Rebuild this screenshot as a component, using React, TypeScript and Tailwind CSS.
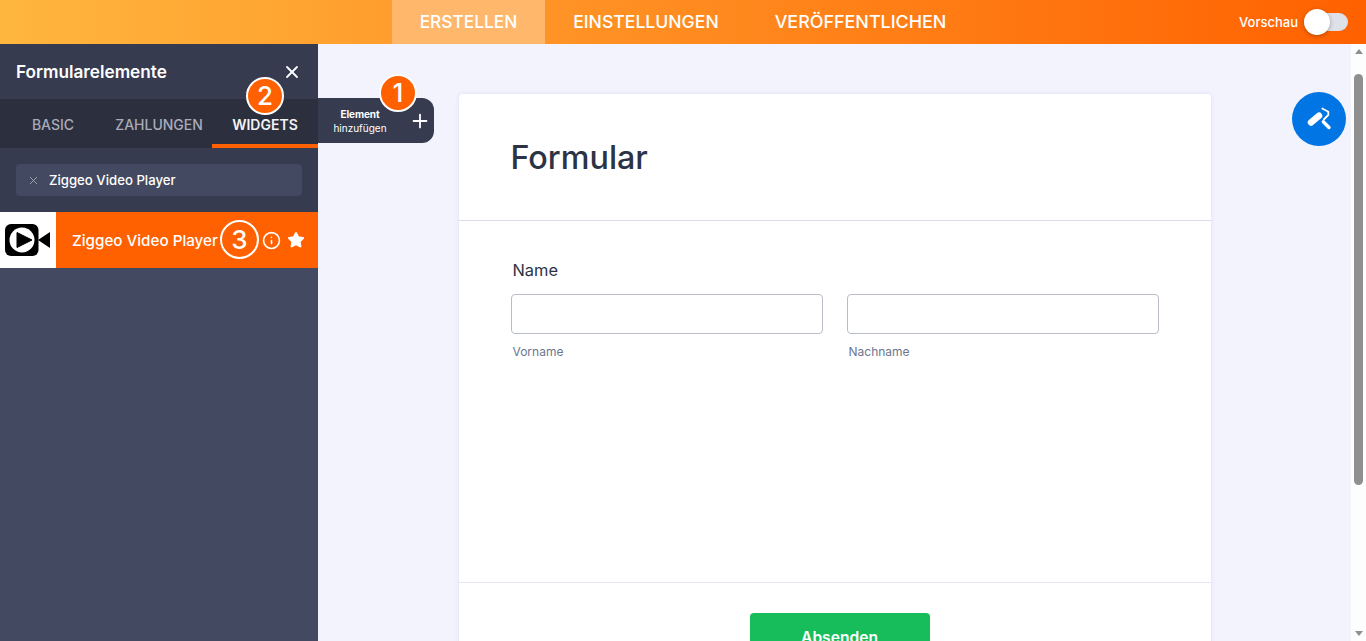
import { Plus, X, Star, Info } from "lucide-react";

function Badge({ n, className }: { n: string; className: string }) {
  return (
    <div className={`absolute z-20 flex items-center justify-center rounded-full border-2 border-white bg-[#ff6100] text-[26px] font-medium leading-none text-white ${className}`}>
      {n}
    </div>
  );
}

function VideoLogo() {
  return (
    <svg width="46" height="32" viewBox="0 0 46 32">
      <rect x="0" y="0" width="33.5" height="32" rx="6" fill="#000" />
      <circle cx="17" cy="16" r="12.5" fill="#fff" />
      <path d="M12 8.5 L27 16 L12 23.5 Z" fill="#000" stroke="#000" strokeWidth="1" strokeLinejoin="round" />
      <path d="M33 16 L45 8 V24 Z" fill="#000" />
    </svg>
  );
}

function RollerIcon() {
  return (
    <svg width="26" height="26" viewBox="0 0 26 26" fill="none">
      <path d="M5 16.5 L13 9.8" stroke="#fff" strokeWidth="6.5" strokeLinecap="round" />
      <path d="M15.7 2.3 L22.3 5.7 V9 L17.3 14" stroke="#fff" strokeWidth="1.8" strokeLinejoin="round" fill="none" />
      <path d="M17.3 15.7 L23 21.5" stroke="#fff" strokeWidth="3.4" strokeLinecap="round" />
    </svg>
  );
}

export default function App() {
  return (
    <div className="relative flex h-[641px] w-[1366px] flex-col overflow-hidden bg-[#f3f3fe] font-['Inter',sans-serif]">
      <header className="relative flex h-11 shrink-0 items-stretch justify-center bg-[linear-gradient(90deg,#ffb63f_0%,#ff6100_100%)] text-white">
        <nav className="flex items-stretch font-medium">
          <a className="flex items-center bg-[#ffb76b] px-7 text-[17.3px]">ERSTELLEN</a>
          <a className="flex items-center px-7 text-[17.6px]">EINSTELLUNGEN</a>
          <a className="flex items-center px-7 text-[17.9px]">VERÖFFENTLICHEN</a>
        </nav>
        <div className="absolute right-[18px] top-0 flex h-11 items-center gap-[6px]">
          <span className="pt-[1px] text-[13px] font-medium">Vorschau</span>
          <div className="relative h-[18px] w-11 rounded-full bg-[#dfe1e8]">
            <div className="absolute left-0 top-[-4px] h-[26px] w-[26px] rounded-full bg-white shadow-[0_1px_4px_rgba(0,0,0,0.3)]" />
          </div>
        </div>
      </header>

      <div className="flex min-h-0 flex-1">
        <aside className="flex w-[318px] shrink-0 flex-col bg-[#434960] text-white">
          <div className="flex h-[55px] items-center justify-between bg-[#363b4f] pl-4 pr-[16px]">
            <h2 className="pt-[1px] text-[17.2px] font-semibold">Formularelemente</h2>
            <X size={20} strokeWidth={2.2} />
          </div>
          <div className="flex h-[49px] bg-[#2c2f3e] text-[14px] font-medium">
            <div className="flex w-[106px] items-center justify-center pt-[2px] text-[#a9abb8]">BASIC</div>
            <div className="flex w-[106px] items-center justify-center pt-[2px] text-[#a9abb8]">ZAHLUNGEN</div>
            <div className="flex w-[106px] items-center justify-center border-b-4 border-[#ff6100] pt-[5px] font-semibold text-[#f2f2f5]">WIDGETS</div>
          </div>
          <div className="flex h-16 items-center bg-[#363b4f] px-4">
            <div className="flex h-8 w-full items-center gap-[9px] rounded bg-[#434960] pl-[11px] text-[13.2px] font-medium">
              <X size={13} strokeWidth={1.6} className="text-[#a9abb8]" />
              <span className="pt-[2px]">Ziggeo Video Player</span>
            </div>
          </div>
          <div className="flex h-14 bg-[#ff6100]">
            <div className="flex w-14 items-center justify-center bg-white pr-[1px]">
              <VideoLogo />
            </div>
            <div className="flex flex-1 items-center pl-4 pr-[13px]">
              <span className="flex-1 pt-[2px] text-[15.2px] font-medium">Ziggeo Video Player</span>
              <Info size={19} strokeWidth={2} className="mr-[6px]" />
              <Star size={18} fill="#fff" strokeWidth={1.6} />
            </div>
          </div>
        </aside>

        <main className="relative min-w-0 flex-1 overflow-hidden pt-[50px]">
          <section className="mx-auto w-[752px] rounded-t bg-white shadow-[0_0_4px_rgba(87,100,160,0.15)]">
            <div className="flex h-[127px] items-center border-b border-[#dcdde8] pl-[52px] pt-[2px]">
              <h1 className="text-[32.3px] font-medium leading-none text-[#2c3345]">Formular</h1>
            </div>
            <div className="h-[361px] px-[52px] pt-[39px] text-[#2c3345]">
              <label className="block pl-[2px] text-[16.4px] font-normal leading-5">Name</label>
              <div className="mt-[14px] flex gap-6">
                <div className="w-[312px]">
                  <div className="h-10 rounded border border-[#b8bdc9]" />
                  <p className="mt-[10px] pl-[2px] text-[12px] leading-4 text-[#6c7691]">Vorname</p>
                </div>
                <div className="w-[312px]">
                  <div className="h-10 rounded border border-[#b8bdc9]" />
                  <p className="mt-[10px] pl-[2px] text-[12px] leading-4 text-[#6c7691]">Nachname</p>
                </div>
              </div>
            </div>
            <div className="flex justify-center border-t border-[#e6e6f2] pl-[10px] pt-[30px]">
              <button className="h-12 w-[180px] rounded bg-[#18bd5b] pt-[2px] text-[15.6px] font-semibold text-white">Absenden</button>
            </div>
          </section>
          <div className="absolute right-[5px] top-[48px] flex h-[54px] w-[54px] items-center justify-center rounded-full bg-[#0075e3]">
            <RollerIcon />
          </div>
        </main>

        <div className="flex w-[15px] shrink-0 flex-col items-center bg-[#fdfdfd]">
          <div className="mt-[5px] h-0 w-0 border-x-[4px] border-b-[5px] border-x-transparent border-b-[#8f8f8f]" />
          <div className="mt-[20px] h-[411px] w-[9px] rounded-full bg-[#8f8f8f]" />
          <div className="mt-auto mb-[5px] h-0 w-0 border-x-[4px] border-t-[5px] border-x-transparent border-t-[#8f8f8f]" />
        </div>
      </div>

      <div className="absolute left-[318px] top-[98px] z-10 flex h-[45px] w-[116px] items-center rounded-r-[12px] bg-[#363b4f] text-white">
        <div className="w-[84px] text-center text-[10px] leading-[14px]">
          <div className="font-bold tracking-[-0.1px]">Element</div>
          <div>hinzufügen</div>
        </div>
        <Plus size={22} strokeWidth={2} className="ml-[7px]" />
      </div>
      <Badge n="1" className="left-[379px] top-[74px] h-[38px] w-[38px]" />
      <Badge n="2" className="left-[246px] top-[77px] h-[38px] w-[38px]" />
      <Badge n="3" className="left-[220px] top-[220px] h-[39px] w-[39px]" />
    </div>
  );
}
